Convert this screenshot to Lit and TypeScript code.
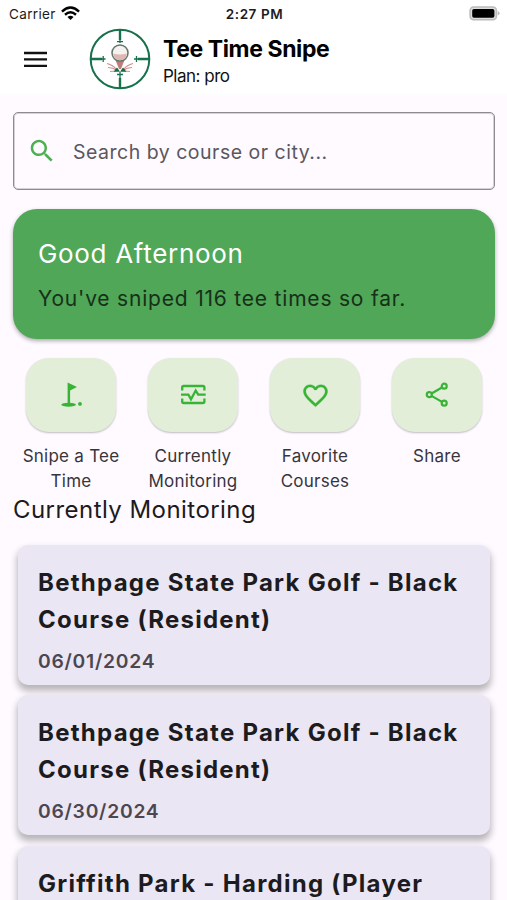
import { LitElement, html, css, svg } from "lit";
import { customElement } from "lit/decorators.js";

const flagIcon = svg`<svg viewBox="0 0 28 28" class="glyph" fill="currentColor">
  <path d="M10.600 1.600 20 6.100 13.100 9.600V23h-2.500z"/>
  <ellipse cx="11.600" cy="23.700" rx="7.300" ry="2"/>
  <circle cx="23" cy="22.900" r="1.900"/></svg>`;

const monitorIcon = svg`<svg viewBox="0 0 28 28" class="glyph" fill="none" stroke="currentColor" stroke-width="2.300">
  <path d="M3.200 9.600V6.500Q3.200 5 4.700 5h19.200q1.500 0 1.500 1.500v3.100M3.200 17.400v3.100q0 1.500 1.500 1.500h19.200q1.500 0 1.500-1.500v-3.100"/>
  <path d="M2 13.600h7.400l2.600 4.700 4.700-8.800 2.500 4.100h7.500"/></svg>`;

const heartIcon = svg`<svg viewBox="0 0 24 24" class="heart"><path fill="currentColor" stroke="currentColor" stroke-width=".25" d="M16.500 3c-1.740 0-3.410.81-4.500 2.090C10.910 3.810 9.240 3 7.500 3 4.420 3 2 5.420 2 8.500c0 3.780 3.400 6.860 8.550 11.540L12 21.350l1.450-1.320C18.600 15.360 22 12.280 22 8.500 22 5.420 19.580 3 16.500 3zm-4.400 15.550l-.1.100-.1-.100C7.140 14.240 4 11.390 4 8.500 4 6.500 5.500 5 7.500 5c1.540 0 3.040.99 3.570 2.360h1.870C13.460 5.990 14.960 5 16.500 5c2 0 3.500 1.500 3.500 3.500 0 2.890-3.140 5.740-7.900 10.050z"/></svg>`;

const shareIcon = svg`<svg viewBox="0 0 28 28" class="glyph" fill="none" stroke="currentColor" stroke-width="2.200">
  <circle cx="6.300" cy="13.700" r="2.500"/><circle cx="21.200" cy="5.200" r="2.500"/><circle cx="21.200" cy="22.200" r="2.500"/>
  <path d="M8.500 12.500 19 6.500M8.500 14.900l10.500 6"/></svg>`;

const actions = [
  { icon: flagIcon, label: "Snipe a Tee Time" },
  { icon: monitorIcon, label: "Currently Monitoring" },
  { icon: heartIcon, label: "Favorite Courses" },
  { icon: shareIcon, label: "Share" },
];

const monitored = [
  { lines: ["Bethpage State Park Golf - Black", "Course (Resident)"], date: "06/01/2024" },
  { lines: ["Bethpage State Park Golf - Black", "Course (Resident)"], date: "06/30/2024" },
  { lines: ["Griffith Park - Harding (Player"], date: "" },
];

@customElement("app-root")
export class AppRoot extends LitElement {
  static styles = css`
    :host { display: block; height: 900px; overflow: hidden; background: #fefaff; color: #1c1b20;
      font-family: Inter, "Liberation Sans", sans-serif; }
    * { box-sizing: border-box; }
    svg { display: block; flex: none; }
    .top { background: linear-gradient(#fff 92px, #fefaff); height: 98px; }
    .status { height: 27px; display: grid; grid-template-columns: 1fr auto 1fr; align-items: center;
      padding: 0 7px 0 9px; font-size: 13.500px; }
    .carrier { display: flex; align-items: center; gap: 5px; letter-spacing: .35px; }
    .clock { font-weight: 600; font-size: 13.500px; letter-spacing: .55px; }
    .battery { justify-self: end; }
    .bar { display: flex; align-items: center; padding-left: 24px; height: 64px; }
    .logo { margin: 0 12px 0 42px; }
    .titles { padding-top: 6px; }
    .name { font-weight: 700; font-size: 23px; line-height: 28px; letter-spacing: -.4px; color: #000; }
    .plan { font-size: 17px; line-height: 26px; letter-spacing: -.5px; color: #111; }
    .search { margin: 14px 12px 0 13px; height: 78px; border: 1px solid #8d8a90; border-radius: 5px;
      box-shadow: inset 0 0 0 1px rgba(120,115,125,.3);
      display: flex; align-items: center; padding-left: 13px; gap: 16px; color: #5a575e;
      font-size: 19.500px; letter-spacing: .5px; }
    .search span { padding-top: 1px; }
    .search svg { color: #4caf50; }
    .hero { margin: 19px 12px 0 13px; height: 130px; border-radius: 24px; background: #50a757; padding: 26px 25px;
      box-shadow: 0 2px 4px rgba(0,0,0,.32); }
    .greet { color: #fff; font-size: 26px; line-height: 37px; letter-spacing: .68px; }
    .sniped { color: #17301a; font-size: 21px; line-height: 30px; margin-top: 12px; letter-spacing: .8px; }
    .actions { margin: 19px 9px 0 10px; display: grid; grid-template-columns: repeat(4, 122px); height: 136px; }
    .action { display: flex; flex-direction: column; align-items: center; }
    .tile { width: 90px; height: 74px; border-radius: 23px; background: #e3eed9; color: #37b336;
      display: grid; place-items: center; box-shadow: 0 1px 2px rgba(0,0,0,.25); }
    .glyph { width: 28px; height: 28px; }
    .heart { width: 29px; height: 29px; }
    .label { margin-top: 12px; width: 108px; text-align: center; font-size: 17px; line-height: 24.500px;
      letter-spacing: .25px; color: #37353b; }
    .section { margin: 0 0 0 13px; font-size: 24px; font-weight: 400; line-height: 32px; letter-spacing: .45px; }
    .list { margin: 19px 17px 0 18px; display: flex; flex-direction: column; gap: 10.300px; }
    .card { height: 140px; flex: none; border-radius: 10px; background: #ebe6f3; padding: 20px;
      box-shadow: 0 5px 7px 1px rgba(0,0,0,.28); }
    .course { font-size: 24px; font-weight: 650; line-height: 36.500px; letter-spacing: 1.260px; white-space: nowrap; }
    .date { margin-top: 10px; font-size: 19.300px; font-weight: 600; line-height: 27px; letter-spacing: .75px; color: #4b4752; }
  `;

  render() {
    return html`
      <header class="top">
        <div class="status">
          <div class="carrier"><span>Carrier</span>
            <svg width="19" height="15" viewBox="0 0 18 14" fill="none" stroke="#000" stroke-width="2.300">
              <path d="M.9 5.200Q9-2.400 17.100 5.200M3.800 8.200q5.200-4.700 10.400 0"/>
              <path d="M9 13.200 6.100 10.300q2.900-2.400 5.800 0z" fill="#000" stroke="none"/></svg>
          </div>
          <div class="clock">2:27 PM</div>
          <svg class="battery" width="32" height="16" viewBox="0 0 32 16">
            <rect x="2.100" y=".9" width="26.300" height="12.900" rx="3.500" fill="#ddd" stroke="#bbb" stroke-width="1.500"/>
            <rect x="4.200" y="3" width="22.200" height="8.700" rx="1.800"/>
            <path d="M29.600 4.900q2 .7 2 2.300t-2 2.300z" fill="#bbb"/></svg>
        </div>
        <div class="bar">
          <svg width="23" height="18" viewBox="0 0 23 18" stroke="#111" stroke-width="2.300"><path d="M0 3h23M0 9.400h23M0 15.800h23"/></svg>
          <svg class="logo" width="62" height="62" viewBox="0 0 62 62" fill="none">
            <g stroke="#17714a"><circle cx="31" cy="31" r="29.300" stroke-width="2"/>
              <path stroke-width="2.400" d="M31 2v10M31 50v10M2 31h11M49 31h11"/>
              <path stroke-width="1.300" d="M31 12v3M28 13.600h6M31 44v6M28 46.500h6M12 31h4.500M14.200 28v6M45 31h5M47.500 28v6"/></g>
            <g stroke="#d08f8f" stroke-width="1.200"><path d="M18 35.500q6 1.500 9.500 6M19 39.500q5 0 9 3M21 43.500l6-.5M44 35.500q-6 1.500-9.500 6M43 39.500q-5 0-9 3M41 43.500l-6-.5"/></g>
            <path d="M26.500 32h9L32 41h-2z" fill="#c27b7b"/>
            <circle cx="31" cy="25" r="8" fill="#f6f2ef" stroke="#61756a" stroke-width="1.500"/>
            <path d="M24.200 25.500q6.800 2 13.600 0-.5 6.500-6.800 6.700-6.300-.2-6.800-6.700z" fill="#dfb8b4"/>
            <path d="M24.500 43.700 28 39.500l3 4.200zM31 43.700l3-4.200 3.500 4.200z" fill="#146c43"/>
          </svg>
          <div class="titles"><div class="name">Tee Time Snipe</div><div class="plan">Plan: pro</div></div>
        </div>
      </header>
      <div class="search">
        <svg width="30" height="30" viewBox="0 0 24 24"><path fill="currentColor" d="M15.500 14h-.79l-.28-.27C15.410 12.590 16 11.110 16 9.500 16 5.910 13.090 3 9.500 3S3 5.910 3 9.500 5.910 16 9.500 16c1.610 0 3.090-.59 4.230-1.570l.27.28v.79l5 4.990L20.490 19l-4.990-5zm-6 0C7.010 14 5 11.990 5 9.500S7.010 5 9.500 5 14 7.010 14 9.500 11.990 14 9.500 14z"/></svg>
        <span>Search by course or city...</span>
      </div>
      <section class="hero">
        <div class="greet">Good Afternoon</div>
        <div class="sniped">You've sniped 116 tee times so far.</div>
      </section>
      <nav class="actions">
        ${actions.map(a => html`<div class="action"><div class="tile">${a.icon}</div><div class="label">${a.label}</div></div>`)}
      </nav>
      <div class="section">Currently Monitoring</div>
      <div class="list">
        ${monitored.map(m => html`<article class="card">
          ${m.lines.map(l => html`<div class="course">${l}</div>`)}
          ${m.date ? html`<div class="date">${m.date}</div>` : ""}</article>`)}
      </div>
    `;
  }
}
